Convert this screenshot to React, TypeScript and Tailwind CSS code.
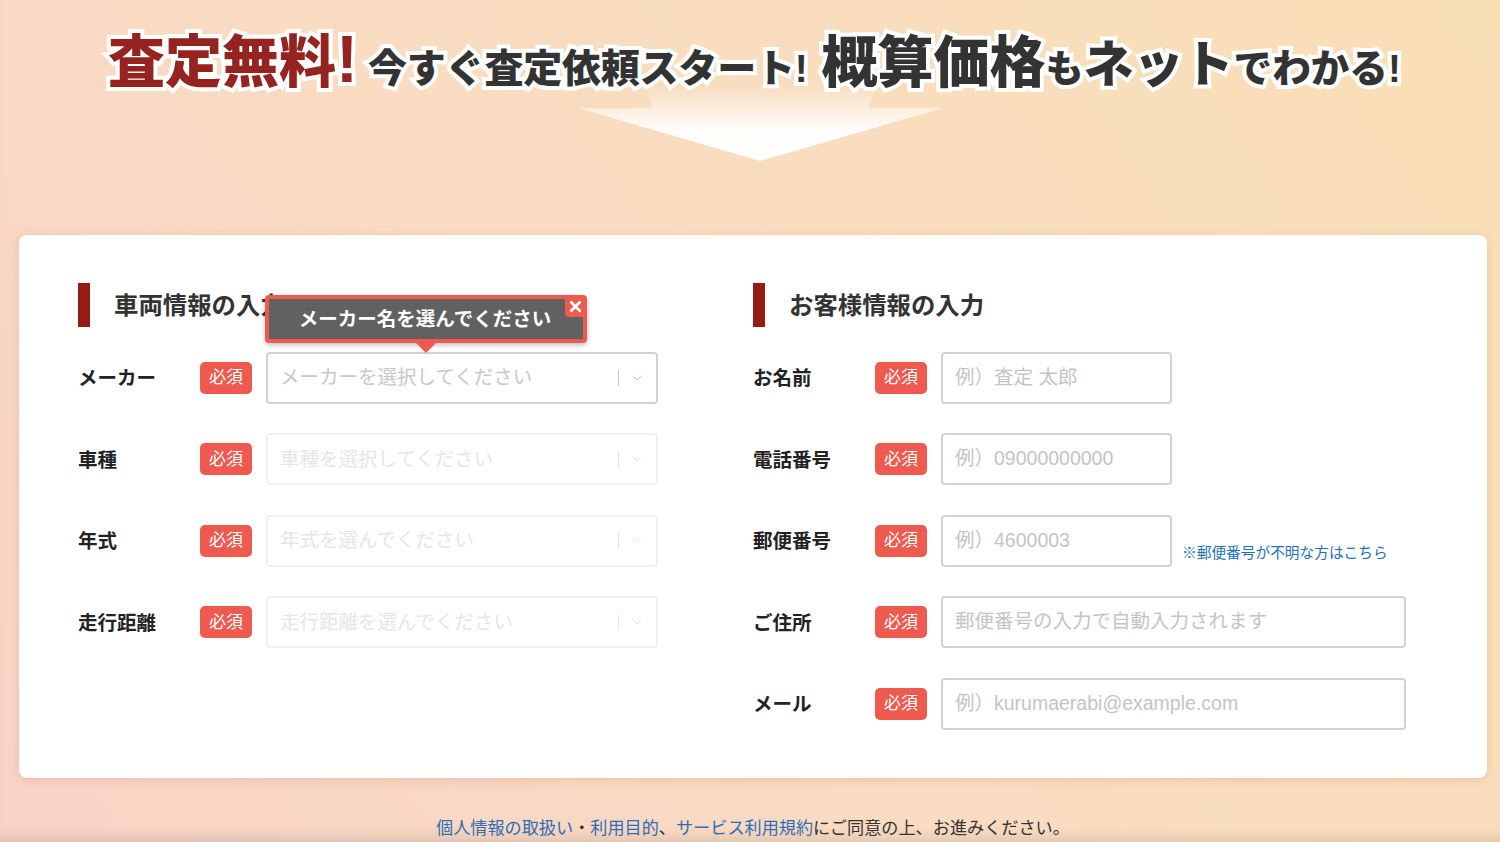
import { ChevronDown, X } from 'lucide-react';

const sans = "font-['Liberation_Sans','Noto_Sans_CJK_JP',sans-serif]";
const outline = "font-black [-webkit-text-stroke:8px_#fff] [paint-order:stroke_fill] leading-none whitespace-nowrap";

function Badge() {
  return (
    <span className="flex h-8 w-[52px] shrink-0 items-center justify-center rounded-[5px] bg-[#ee5a50] pt-px text-[17px] text-white">
      必須
    </span>
  );
}

function Label({ text }: { text: string }) {
  return <span className="relative top-px w-[122px] shrink-0 text-[19.5px] font-bold text-[#222]">{text}</span>;
}

function SectionTitle({ text }: { text: string }) {
  return (
    <div className="flex h-11 items-center gap-6">
      <span className="h-11 w-3 bg-[#951b15]" />
      <h2 className="relative top-px text-[24.4px] font-bold text-[#333]">{text}</h2>
    </div>
  );
}

function SelectRow({ label, placeholder, active }: { label: string; placeholder: string; active?: boolean }) {
  return (
    <div className="flex h-[52px] items-center">
      <Label text={label} />
      <Badge />
      <div
        className={
          active
            ? 'ml-[14px] flex h-[52px] w-[392px] items-center rounded-[4px] border-2 border-[#d2d2d2] bg-white pl-[12px] pr-[11px]'
            : 'ml-[14px] flex h-[52px] w-[392px] items-center rounded-[4px] border-2 border-[#f0f0f0] bg-white pl-[12px] pr-[11px]'
        }
      >
        <span className={active ? 'flex-1 text-[19.5px] text-[#c8c8c8]' : 'flex-1 text-[19.5px] text-[#e6e6e6]'}>
          {placeholder}
        </span>
        <span className={active ? 'mr-[10px] h-4 w-px bg-[#c8c8c8]' : 'mr-[10px] h-4 w-px bg-[#e6e6e6]'} />
        <ChevronDown size={16} strokeWidth={1.5} className={active ? 'text-[#c8c8c8]' : 'text-[#e6e6e6]'} />
      </div>
    </div>
  );
}

function InputRow({ label, placeholder, wide, note }: { label: string; placeholder: string; wide?: boolean; note?: string }) {
  return (
    <div className="flex h-[52px] items-center">
      <Label text={label} />
      <Badge />
      <input
        readOnly
        placeholder={placeholder}
        className={
          wide
            ? 'ml-[14px] h-[52px] w-[465px] rounded-[4px] border-2 border-[#d2d2d2] bg-white px-3 pb-px text-[19.5px] placeholder:text-[#c4c4c4]'
            : 'ml-[14px] h-[52px] w-[231px] rounded-[4px] border-2 border-[#d2d2d2] bg-white px-3 pb-px text-[19.5px] placeholder:text-[#c4c4c4]'
        }
      />
      {note && <a className="ml-[10px] mt-[25px] text-[14.7px] text-[#1e6fc0]">{note}</a>}
    </div>
  );
}

export default function App() {
  return (
    <div
      className={`${sans} flex h-[842px] w-full flex-col overflow-hidden bg-[linear-gradient(55deg,#f8d3c6_0%,#f9dcc2_45%,#f9dfb6_100%)] shadow-[inset_0_-14px_16px_-12px_rgba(0,0,0,0.14)]`}
    >
      <header className="relative h-[235px] shrink-0">
        <svg className="absolute left-[578px] top-[85px]" width="366" height="77" viewBox="0 0 366 77">
          <defs>
            <linearGradient id="arrowFade" x1="0" y1="0" x2="0" y2="1">
              <stop offset="0" stopColor="#fff" stopOpacity="0" />
              <stop offset="0.6" stopColor="#fff" stopOpacity="0.95" />
              <stop offset="1" stopColor="#fff" />
            </linearGradient>
          </defs>
          <path d="M68 0H298L291 23H365L182 76L0 23H74Z" fill="url(#arrowFade)" />
        </svg>
        <div className="relative flex items-baseline pl-[108px] pt-[26px] text-[#333]">
          <span className={`${outline} text-[57px] text-[#952320]`}>査定無料</span>
          <span className={`${outline} text-[66px] text-[#952320]`}>!</span>
          <span className={`${outline} ml-[10px] text-[39px] tracking-[-0.2px]`}>今すぐ査定依頼スタート!</span>
          <span className={`${outline} ml-[14px] text-[56px]`}>概算価格</span>
          <span className={`${outline} text-[38px]`}>も</span>
          <span className={`${outline} text-[50px]`}>ネット</span>
          <span className={`${outline} text-[38.6px]`}>でわかる!</span>
        </div>
      </header>

      <main className="relative ml-[19px] flex h-[543px] w-[1468px] shrink-0 rounded-[8px] bg-white pl-[59px] pt-12 shadow-[0_2px_10px_rgba(225,140,120,0.35)]">
        <section className="w-[675px] shrink-0">
          <SectionTitle text="車両情報の入力" />
          <div className="mt-[24.7px] flex flex-col gap-[29.5px]">
            <SelectRow label="メーカー" placeholder="メーカーを選択してください" active />
            <SelectRow label="車種" placeholder="車種を選択してください" />
            <SelectRow label="年式" placeholder="年式を選んでください" />
            <SelectRow label="走行距離" placeholder="走行距離を選んでください" />
          </div>
        </section>
        <section className="flex-1">
          <SectionTitle text="お客様情報の入力" />
          <div className="mt-[24.7px] flex flex-col gap-[29.5px]">
            <InputRow label="お名前" placeholder="例）査定 太郎" />
            <InputRow label="電話番号" placeholder="例）09000000000" />
            <InputRow label="郵便番号" placeholder="例）4600003" note="※郵便番号が不明な方はこちら" />
            <InputRow label="ご住所" placeholder="郵便番号の入力で自動入力されます" wide />
            <InputRow label="メール" placeholder="例）kurumaerabi@example.com" wide />
          </div>
        </section>

        <div className="absolute left-[246px] top-[60px] flex h-12 w-[322px] items-center justify-center rounded-[4px] border-4 border-[#ee5a50] bg-[#616161] pt-[2px] pr-[2px] text-[19.5px] font-bold text-white shadow-[0_2px_5px_rgba(0,0,0,0.25)]">
          メーカー名を選んでください
          <span className="absolute -right-[3px] -top-[3px] flex h-[21px] w-[21px] items-center justify-center rounded-bl-[4px] bg-[#ee5a50]">
            <X size={17} strokeWidth={4} />
          </span>
          <span className="absolute -bottom-[14px] left-[147px] h-0 w-0 border-x-[10px] border-t-[10px] border-x-transparent border-t-[#ee5a50]" />
        </div>
      </main>

      <p className="mt-[39px] pl-[436px] text-[17.15px] leading-[22px] whitespace-nowrap text-[#333]">
        <a className="text-[#2f6db5]">個人情報の取扱い</a>・<a className="text-[#2f6db5]">利用目的</a>、
        <a className="text-[#2f6db5]">サービス利用規約</a>にご同意の上、お進みください。
      </p>
    </div>
  );
}
